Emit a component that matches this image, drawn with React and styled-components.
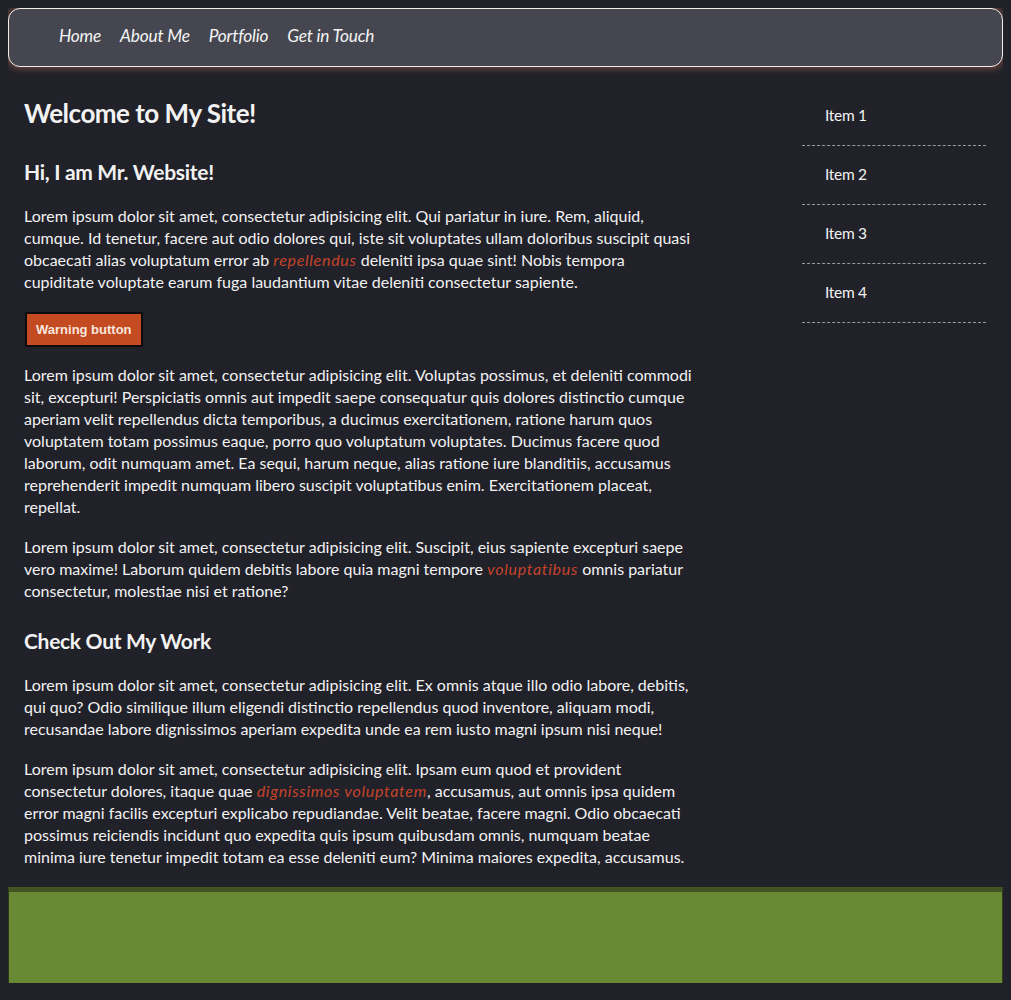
import React from "react";
import styled, { createGlobalStyle } from "styled-components";

const GlobalStyle = createGlobalStyle`
  html, body {
    background-color: #212129;
  }
  body {
    margin: 8px;
    color: #f2f2f2;
    font-family: Lato, "Open Sans", sans-serif;
  }
`;

const Page = styled.div`
  display: flex;
  flex-direction: column;
`;

const NavBar = styled.nav`
  height: 59px;
  box-sizing: border-box;
  display: flex;
  align-items: center;
  column-gap: 19px;
  padding: 0 0 4px 50px;
  background-color: #45464f;
  border: 1px solid #f4ece8;
  border-radius: 12px;
  box-shadow: 0 0 6px 2px rgba(170, 100, 80, 0.55);
`;

const NavLink = styled.a`
  color: #f4f4f4;
  font-style: italic;
  font-size: 17.3px;
  letter-spacing: -0.2px;
  text-decoration: none;
  cursor: pointer;
`;

const Layout = styled.div`
  display: grid;
  grid-template-columns: 1fr 201px;
`;

const Main = styled.main`
  padding: 10px 0 0 16px;
`;

const Title = styled.h1`
  font-family: Lato, sans-serif;
  font-weight: 700;
  font-size: 26px;
  letter-spacing: -0.5px;
  line-height: 32px;
  margin: 20px 0 30px;
`;

const Heading = styled.h2`
  font-family: Lato, sans-serif;
  font-weight: 700;
  font-size: 21px;
  letter-spacing: -0.3px;
  line-height: 26px;
  margin: ${(p) => (p.$first ? "0 0 20px" : "26px 0 20px")};
`;

const Text = styled.p`
  font-size: 16px;
  letter-spacing: 0;
  line-height: 22px;
  margin: 0 0 18px;
  max-width: 670px;
`;

const Em = styled.em`
  color: #c5442a;
  letter-spacing: 0.7px;
`;

const WarningButton = styled.button`
  font-family: "Liberation Sans", Arial, sans-serif;
  font-size: 13px;
  font-weight: 700;
  color: #f6e6dc;
  background-color: #c44a22;
  border: 2px solid #0c0c0c;
  padding: 0 9px;
  height: 35px;
  margin: 1px 0 17px 1px;
  cursor: pointer;
`;

const Aside = styled.aside`
  padding: 20px 17px 0 0;
`;

const SideList = styled.ul`
  list-style: none;
  margin: 0;
  padding: 0;
`;

const SideItem = styled.li`
  height: 59px;
  box-sizing: border-box;
  display: flex;
  align-items: center;
  padding: 0 0 2px 23px;
  font-size: 15.5px;
  letter-spacing: -0.3px;
  border-bottom: 1px dashed #9a9aa2;
`;

const Footer = styled.footer`
  margin-top: 1px;
  height: 91px;
  background-color: #6a8934;
  border-top: 5px solid #445322;
  border-left: 1px solid #2f3a18;
  border-right: 1px solid #2f3a18;
`;

const navItems = ["Home", "About Me", "Portfolio", "Get in Touch"];
const sideItems = ["Item 1", "Item 2", "Item 3", "Item 4"];

const App = () => {
  return (
    <Page>
      <GlobalStyle />
      <NavBar>
        {navItems.map((item) => (
          <NavLink key={item}>{item}</NavLink>
        ))}
      </NavBar>
      <Layout>
        <Main>
          <Title>Welcome to My Site!</Title>
          <Heading $first>Hi, I am Mr. Website!</Heading>
          <Text>
            Lorem ipsum dolor sit amet, consectetur adipisicing elit. Qui
            pariatur in iure. Rem, aliquid, cumque. Id tenetur, facere aut odio
            dolores qui, iste sit voluptates ullam doloribus suscipit quasi
            obcaecati alias voluptatum error ab <Em>repellendus</Em> deleniti
            ipsa quae sint! Nobis tempora cupiditate voluptate earum fuga
            laudantium vitae deleniti consectetur sapiente.
          </Text>
          <WarningButton>Warning button</WarningButton>
          <Text>
            Lorem ipsum dolor sit amet, consectetur adipisicing elit. Voluptas
            possimus, et deleniti commodi sit, excepturi! Perspiciatis omnis
            aut impedit saepe consequatur quis dolores distinctio cumque
            aperiam velit repellendus dicta temporibus, a ducimus
            exercitationem, ratione harum quos voluptatem totam possimus eaque,
            porro quo voluptatum voluptates. Ducimus facere quod laborum, odit
            numquam amet. Ea sequi, harum neque, alias ratione iure blanditiis,
            accusamus reprehenderit impedit numquam libero suscipit
            voluptatibus enim. Exercitationem placeat, repellat.
          </Text>
          <Text>
            Lorem ipsum dolor sit amet, consectetur adipisicing elit. Suscipit,
            eius sapiente excepturi saepe vero maxime! Laborum quidem debitis
            labore quia magni tempore <Em>voluptatibus</Em> omnis pariatur
            consectetur, molestiae nisi et ratione?
          </Text>
          <Heading>Check Out My Work</Heading>
          <Text>
            Lorem ipsum dolor sit amet, consectetur adipisicing elit. Ex omnis
            atque illo odio labore, debitis, qui quo? Odio similique illum
            eligendi distinctio repellendus quod inventore, aliquam modi,
            recusandae labore dignissimos aperiam expedita unde ea rem iusto
            magni ipsum nisi neque!
          </Text>
          <Text>
            Lorem ipsum dolor sit amet, consectetur adipisicing elit. Ipsam eum
            quod et provident consectetur dolores, itaque quae{" "}
            <Em>dignissimos voluptatem</Em>, accusamus, aut omnis ipsa quidem
            error magni facilis excepturi explicabo repudiandae. Velit beatae,
            facere magni. Odio obcaecati possimus reiciendis incidunt quo
            expedita quis ipsum quibusdam omnis, numquam beatae minima iure
            tenetur impedit totam ea esse deleniti eum? Minima maiores
            expedita, accusamus.
          </Text>
        </Main>
        <Aside>
          <SideList>
            {sideItems.map((item) => (
              <SideItem key={item}>{item}</SideItem>
            ))}
          </SideList>
        </Aside>
      </Layout>
      <Footer />
    </Page>
  );
};

export default App;
